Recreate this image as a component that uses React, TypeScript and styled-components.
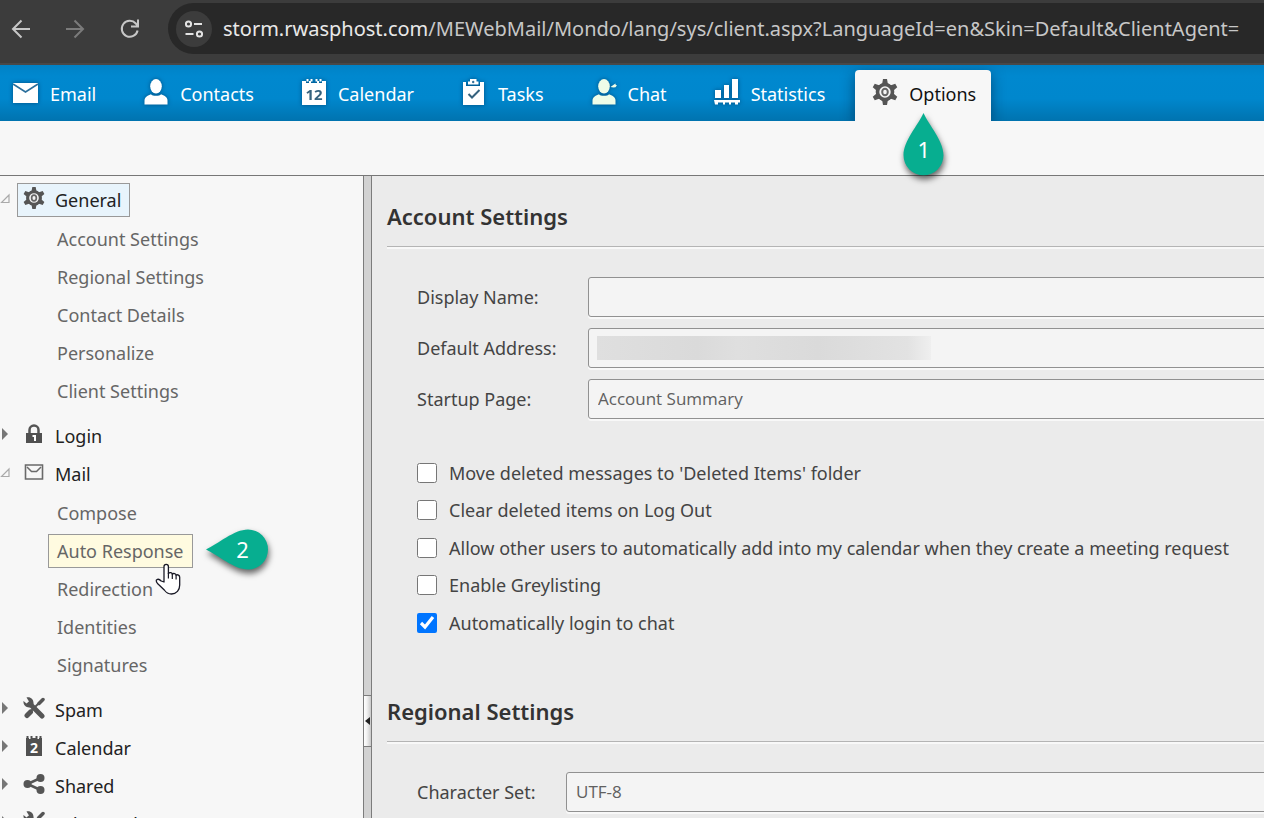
import React from "react";
import styled, { createGlobalStyle, css } from "styled-components";

const fontStack = `"Noto Sans", "Open Sans", sans-serif`;
const fieldFontStack = `"Open Sans", "Noto Sans", sans-serif`;

const GlobalStyle = createGlobalStyle`
  *, *::before, *::after { box-sizing: border-box; }
  body { margin: 0; background: #f7f7f7; color: #333; font: 18px/24px ${fontStack}; }
  button, input, select { font: inherit; color: inherit; }
  a { color: inherit; text-decoration: none; }
  svg { display: block; flex: none; }
`;

const Page = styled.div`
  display: flex;
  flex-direction: column;
  height: 100vh;
  overflow: hidden;
`;

/* Browser bar */

const BrowserBar = styled.header`
  display: flex;
  align-items: center;
  flex: none;
  height: 65px;
  padding-bottom: 6px;
  background: #3c3c3c;
  border-bottom: 2px solid #484848;
`;

const BrowserButton = styled.button<{ $dim?: boolean }>`
  display: flex;
  align-items: center;
  justify-content: center;
  width: 44px;
  height: 44px;
  padding: 0;
  border: 0;
  background: none;
  color: ${(p) => (p.$dim ? "#7b7b7b" : "#c7c7c7")};
  &:first-child { width: 42px; }
  &:nth-child(2) { width: 66px; }
`;

const AddressBar = styled.div`
  display: flex;
  align-items: center;
  flex: 1;
  height: 51px;
  min-width: 0;
  margin-left: 16px;
  padding-left: 8px;
  border-radius: 26px 0 0 26px;
  background: #282828;
  color: #c7c7c7;
  font-size: 20px;
  line-height: 32px;
  white-space: nowrap;
  overflow: hidden;
`;

const SiteInfo = styled.button`
  display: flex;
  align-items: center;
  justify-content: center;
  flex: none;
  width: 36px;
  height: 36px;
  margin-right: 11px;
  padding: 0;
  border: 0;
  border-radius: 50%;
  background: #3c3c3c;
  color: #e3e3e3;
`;

const Host = styled.span`
  color: #e8e8e8;
`;

/* Main navigation */

const Nav = styled.nav`
  display: flex;
  align-items: flex-end;
  gap: 15px;
  flex: none;
  height: 56px;
  margin-left: -4px;
  background: linear-gradient(#0082c6, #0088cf 20%, #0087cd 60%, #0073af);
`;

const NavLink = styled.a<{ $active?: boolean }>`
  position: relative;
  display: flex;
  align-items: center;
  gap: 11px;
  height: 51px;
  padding: 0 15px 4px 17px;
  color: #fff;
  white-space: nowrap;
  > svg { margin-bottom: 4px; }
  ${(p) =>
    p.$active
      ? css`
          z-index: 1;
          border-radius: 4px 4px 0 0;
          background: #f7f7f7;
          color: #111;
          &::before {
            content: "";
            position: absolute;
            inset: 0;
            z-index: -1;
            border-radius: inherit;
            box-shadow: 0 4px 14px rgba(0, 30, 60, 0.55);
            clip-path: inset(-5px -20px 0 -20px);
          }
        `
      : css`
          svg { filter: drop-shadow(0 0 2px rgba(0, 40, 80, 0.6)); }
        `}
`;

const Toolbar = styled.div`
  flex: none;
  height: 55px;
  border-bottom: 1px solid #777;
  background: #f7f7f7;
`;

const Body = styled.div`
  display: flex;
  flex: 1;
  min-height: 0;
`;

/* Options tree */

const Sidebar = styled.aside`
  flex: none;
  width: 363px;
  padding-top: 5px;
  overflow: hidden;
`;

const Tree = styled.ul`
  margin: 0;
  padding: 0;
  list-style: none;
`;

const Branch = styled(Tree)`
  margin: 1px 0 7px;
  padding-left: 48px;
`;

const Row = styled.div`
  display: flex;
  align-items: center;
  height: 38px;
`;

const Expander = styled.button`
  display: flex;
  align-items: center;
  width: 17px;
  height: 34px;
  padding: 0 0 4px;
  border: 0;
  background: none;
`;

const GroupLink = styled.a<{ $selected?: boolean }>`
  display: flex;
  align-items: center;
  gap: 10px;
  height: 34px;
  padding: 0 8px 0 5px;
  border: 1px solid ${(p) => (p.$selected ? "#999" : "transparent")};
  background: ${(p) => (p.$selected ? "#e8f4fc" : "transparent")};
  color: #222;
  svg { margin-bottom: 4px; }
`;

const ItemLink = styled.a<{ $hovered?: boolean }>`
  position: relative;
  display: flex;
  align-items: center;
  height: 34px;
  padding: 0 8px;
  border: 1px solid ${(p) => (p.$hovered ? "#999" : "transparent")};
  background: ${(p) => (p.$hovered ? "#fffbe0" : "transparent")};
  color: #666;
  white-space: nowrap;
`;

const Cursor = styled.span`
  position: absolute;
  left: 106px;
  top: 28px;
  z-index: 2;
`;

/* Callouts */

const Callout = styled.span<{ $side: "below" | "right" }>`
  position: absolute;
  z-index: 3;
  color: #fff;
  font-size: 22px;
  line-height: 40px;
  text-align: center;
  svg {
    position: absolute;
    inset: 0;
    overflow: visible;
    filter: drop-shadow(1px 4px 3px rgba(0, 0, 0, 0.6));
  }
  ${(p) =>
    p.$side === "below"
      ? css`
          left: calc(50% - 20px);
          top: 43px;
          width: 41px;
          padding-top: 16px;
        `
      : css`
          left: calc(100% + 14px);
          top: -6px;
          width: 62px;
          padding-left: 12px;
        `}
`;

const CalloutNumber = styled.span`
  position: relative;
`;

/* Splitter */

const Splitter = styled.div`
  display: flex;
  flex-direction: column;
  justify-content: flex-end;
  flex: none;
  width: 9px;
  padding-bottom: 71px;
  border: solid #7c7c7c;
  border-width: 0 1px;
  background: #d2d2d2;
`;

const SplitterHandle = styled.button`
  display: flex;
  align-items: center;
  justify-content: center;
  width: 7px;
  height: 52px;
  padding: 0;
  border: solid #7c7c7c;
  border-width: 1px 0;
  background: linear-gradient(90deg, #fff, #f2f2f2 40%, #c9c9c9);
`;

/* Settings form */

const Content = styled.main`
  flex: 1;
  min-width: 0;
  padding: 22px 0 0 15px;
  background: #ebebeb;
  overflow: hidden;
`;

const Section = styled.section`
  margin-bottom: 52px;
`;

const Heading = styled.h2`
  margin: 0 0 30px;
  padding-bottom: 12px;
  border-bottom: 1px solid #b4b4b4;
  box-shadow: 0 2px 0 #f8f8f8;
  color: #333;
  font-size: 22px;
  line-height: 36px;
  font-weight: 600;
`;

const Fields = styled.div`
  display: flex;
  flex-direction: column;
  gap: 11px;
  padding-left: 30px;
`;

const Field = styled.div<{ $labelWidth: number }>`
  display: grid;
  grid-template-columns: ${(p) => p.$labelWidth}px 1fr;
  align-items: center;
  margin-right: -20px;
  color: #444;
`;

const boxStyle = css`
  width: 100%;
  height: 40px;
  padding: 0 9px;
  border: 1px solid #919191;
  border-radius: 3px;
  background: #f4f4f4;
  box-shadow: 0 2px 0 #f8f8f8;
  color: #606060;
  font-family: ${fieldFontStack};
  font-size: 17px;
  outline: 0;
  appearance: none;
`;

const TextBox = styled.input`
  ${boxStyle}
`;

const SelectBox = styled.select<{ $masked?: boolean }>`
  ${boxStyle}
  ${(p) =>
    p.$masked &&
    css`
      background: linear-gradient(90deg, #dfdfdf, #dadada 30%, #dfdfdf 42%, #dadada 66%, #e2e2e2 93%, #efefef)
        8px 7px / 334px 24px no-repeat #f4f4f4;
    `}
`;

const Checks = styled.div`
  display: flex;
  flex-direction: column;
  margin-top: 35px;
  padding-left: 30px;
`;

const CheckLabel = styled.label`
  display: flex;
  align-items: center;
  gap: 12px;
  height: 38px;
  color: #444;
  white-space: nowrap;
  &:nth-child(odd) { height: 37px; }
`;

const Checkbox = styled.input`
  flex: none;
  width: 20px;
  height: 20px;
  margin: 0;
  accent-color: #0075ff;
`;

/* Icons */

const BackIcon = () => (
  <svg width="20" height="20" viewBox="0 0 20 20" fill="none" stroke="currentColor" strokeWidth="2">
    <path d="M19 10H2.5M10.5 1.5L2 10l8.500 8.500" />
  </svg>
);

const ForwardIcon = () => (
  <svg width="20" height="20" viewBox="0 0 20 20" fill="none" stroke="currentColor" strokeWidth="2">
    <path d="M1 10H17.500M9.500 1.500L18 10l-8.500 8.500" />
  </svg>
);

const ReloadIcon = () => (
  <svg width="20" height="20" viewBox="0 0 20 20" fill="none" stroke="currentColor" strokeWidth="2">
    <path d="M17.600 11.500A8 8 0 1 1 15.800 4.500L17.500 6.500M18 0.500V7.500H11" />
  </svg>
);

const TuneIcon = () => (
  <svg width="20" height="20" viewBox="0 0 20 20" fill="none" stroke="currentColor" strokeWidth="2">
    <circle cx="4.500" cy="5" r="2.600" />
    <path d="M10 5h8M1.500 15h8" />
    <circle cx="15.500" cy="15" r="2.600" />
  </svg>
);

const EmailIcon = () => (
  <svg width="26" height="28" viewBox="0 0 26 28">
    <path fill="#fff" d="M0 5h25v20H0z" />
    <path fill="none" stroke="#2b6f9c" strokeWidth="1.600" d="M0 6l12.500 8 12.500-8" />
  </svg>
);

const PersonShape = ({ fill }: { fill: string }) => (
  <g fill={fill}>
    <ellipse cx="13" cy="8.300" rx="5.800" ry="7.300" />
    <path d="M1.500 26.500v-4c0-3.500 3.500-5 6.500-6.200 1.200 2 8.800 2 10 0 3 1.200 6.500 2.700 6.500 6.200v4z" />
  </g>
);

const ContactsIcon = () => (
  <svg width="26" height="28" viewBox="0 0 26 28"><PersonShape fill="#fff" /></svg>
);

const ChatIcon = () => (
  <svg width="26" height="28" viewBox="0 0 26 28">
    <PersonShape fill="#eefde8" />
    <path fill="#eefde8" d="M19.500 9l3.500-2.500 1.500-1 .2 1.500 1.300.2-1.500 2-2 .3z" />
  </svg>
);

const CalendarNavIcon = () => (
  <svg width="26" height="28" viewBox="0 0 26 28">
    <path fill="#fff" d="M1 3h4v2h3V3h2v2h6V3h2v2h3V3h4v24H1z" />
    <path stroke="#fff" strokeWidth="2" d="M6.500 1v2.500M19.500 1v2.500M10.500 1v2.500M15.500 1v2.500" />
    <text x="13" y="22" textAnchor="middle" fontSize="15" fontWeight="700" fill="#35617d">12</text>
  </svg>
);

const TasksIcon = () => (
  <svg width="26" height="28" viewBox="0 0 26 28">
    <path fill="#fff" d="M2 4h3v4h14V4h4v23H2zM7 6.500V3.500h2V1h6.500v2.500h2v3z" />
    <circle cx="12.200" cy="4" r="1.200" fill="#35719a" />
    <path fill="none" stroke="#35617d" strokeWidth="2" d="M7.500 16l3.500 3.500 7.500-7.500" />
  </svg>
);

const StatisticsIcon = () => (
  <svg width="26" height="28" viewBox="0 0 26 28">
    <path fill="#fff" d="M1 12h6v8H1zM10 7h5v13h-5zM18 1h6v19h-6zM0 22h26v2.500h-2v2h-3v-2h-4v2h-2v-2h-4v2H9v-2H4v2H1z" />
  </svg>
);

const GearIcon = ({ size }: { size: number }) => (
  <svg width={size} height={size} viewBox="0 0 26 26">
    {[0, 60, 120, 180, 240, 300].map((angle) => (
      <path key={angle} fill="#555" transform={`rotate(${angle} 13 13)`} d="M11 0h4l.8 4.500 2.200 1.500H8l2.200-1.500z" />
    ))}
    <circle cx="13" cy="13" r="7.500" fill="#f4f4f4" stroke="#555" strokeWidth="3.600" />
    <ellipse cx="13" cy="13" rx="2.800" ry="3.300" fill="none" stroke="#666" strokeWidth="2" />
  </svg>
);

const LockIcon = () => (
  <svg width="22" height="22" viewBox="0 0 22 22">
    <path fill="none" stroke="#555" strokeWidth="2.500" d="M6.500 10V7a4.500 4.500 0 0 1 9 0V10" />
    <path fill="#505050" d="M3 10h16v10H3z" />
    <path fill="none" stroke="#fff" strokeWidth="2" d="M9.500 13H12V18" />
  </svg>
);

const MailIcon = () => (
  <svg width="22" height="22" viewBox="0 0 22 22" fill="none" stroke="#6a6a6a">
    <path strokeWidth="1.600" d="M2.500 4h17v14h-17z" />
    <path strokeWidth="1.500" d="M4 6l4.500 4.500h5L18 6" />
  </svg>
);

const ToolsIcon = () => (
  <svg width="22" height="22" viewBox="0 0 22 22">
    <g fill="none" stroke="#555" strokeLinecap="round">
      <path strokeWidth="5" d="M4 18.500l3.500-3.500" />
      <path strokeWidth="2" d="M8 14l7-7" />
      <path strokeWidth="3.500" d="M16 6.500l4-4" />
      <path strokeWidth="5" d="M7 7l12 12" />
    </g>
    <path fill="#555" d="M3.500 .5C8-.5 11 3 10.500 7L7 10.500C3 11 0 8 .5 4L3.500 6.500 6 4.500z" />
  </svg>
);

const CalendarIcon = () => (
  <svg width="22" height="22" viewBox="0 0 22 22">
    <path fill="#505050" d="M3 3h3v1h3V3h4v1h3V3h3v18H3z" />
    <path stroke="#505050" strokeWidth="2" d="M4.500 1v3M8.500 1v3M13.500 1v3M17.500 1v3" />
    <text x="11" y="18" textAnchor="middle" fontSize="14" fontWeight="700" fill="#fff">2</text>
  </svg>
);

const ShareIcon = () => (
  <svg width="22" height="22" viewBox="0 0 22 22" fill="#555">
    <path fill="none" stroke="#555" strokeWidth="2.500" d="M17.500 5L4.500 11l13 6" />
    <circle cx="4.500" cy="11" r="4" />
    <circle cx="17.500" cy="5" r="4" />
    <circle cx="17.500" cy="17" r="4" />
  </svg>
);

const OpenArrow = () => (
  <svg width="10" height="10" viewBox="0 0 10 10">
    <path fill="none" stroke="#aaa" strokeWidth="1.200" d="M1.500 9.500H9V2z" />
  </svg>
);

const ClosedArrow = () => (
  <svg width="10" height="12" viewBox="0 0 10 12"><path fill="#777" d="M2 0l6 6-6 6z" /></svg>
);

const HandIcon = () => (
  <svg width="30" height="34" viewBox="0 0 30 34">
    <path
      fill="#fff"
      stroke="#181825"
      strokeWidth="1.300"
      strokeLinejoin="round"
      d="M9 19V3.500a2.200 2.200 0 0 1 4.400 0V10.500c1.200-1.400 3.500-1 3.900.6 1.300-1.100 3.400-.6 3.800 1 1.500-.8 3.600 0 3.600 2.200V22c0 5-3.200 9-8.200 9-3.500 0-5.500-1.500-7.200-4L2.500 20.500c-1-1.500-1.800-3-.8-3.700 1.300-1 3.200-.2 4.500 1.200z"
    />
    <path fill="none" stroke="#181825" strokeWidth="1.200" d="M13.400 10v5.500M17.300 11v5M21.100 12v4.500" />
  </svg>
);

const BelowPin = () => (
  <svg width="41" height="63" viewBox="0 0 41 63">
    <path fill="#07ae90" d="M20.500 0C26 12 40.500 28 40.500 42.300A20 20 0 0 1 .5 42.300C.5 28 15 12 20.500 0z" />
  </svg>
);

const RightPin = () => (
  <svg width="62" height="41" viewBox="0 0 62 41">
    <path fill="#07ae90" d="M0 20.500C12 15 28 .5 42 .5A20 20 0 0 1 42 40.500C28 40.500 12 26 0 20.500z" />
  </svg>
);

/* Data */

const navItems = [
  { label: "Email", icon: <EmailIcon /> },
  { label: "Contacts", icon: <ContactsIcon /> },
  { label: "Calendar", icon: <CalendarNavIcon /> },
  { label: "Tasks", icon: <TasksIcon /> },
  { label: "Chat", icon: <ChatIcon /> },
  { label: "Statistics", icon: <StatisticsIcon /> },
];

const groups: { label: string; icon: React.ReactNode; items?: string[] }[] = [
  {
    label: "General",
    icon: <GearIcon size={22} />,
    items: ["Account Settings", "Regional Settings", "Contact Details", "Personalize", "Client Settings"],
  },
  { label: "Login", icon: <LockIcon /> },
  {
    label: "Mail",
    icon: <MailIcon />,
    items: ["Compose", "Auto Response", "Redirection", "Identities", "Signatures"],
  },
  { label: "Spam", icon: <ToolsIcon /> },
  { label: "Calendar", icon: <CalendarIcon /> },
  { label: "Shared", icon: <ShareIcon /> },
  { label: "Advanced", icon: <ToolsIcon /> },
];

const checks = [
  { label: "Move deleted messages to 'Deleted Items' folder" },
  { label: "Clear deleted items on Log Out" },
  { label: "Allow other users to automatically add into my calendar when they create a meeting request" },
  { label: "Enable Greylisting" },
  { label: "Automatically login to chat", checked: true },
];

const TreeItem = ({ label }: { label: string }) => {
  const hovered = label === "Auto Response";
  return (
    <Row as="li">
      <ItemLink href="#" $hovered={hovered}>
        {label}
        {hovered && (
          <>
            <Callout $side="right">
              <RightPin />
              <CalloutNumber>2</CalloutNumber>
            </Callout>
            <Cursor><HandIcon /></Cursor>
          </>
        )}
      </ItemLink>
    </Row>
  );
};

export default function App() {
  return (
    <Page>
      <GlobalStyle />
      <BrowserBar>
        <BrowserButton aria-label="Back"><BackIcon /></BrowserButton>
        <BrowserButton aria-label="Forward" $dim><ForwardIcon /></BrowserButton>
        <BrowserButton aria-label="Reload"><ReloadIcon /></BrowserButton>
        <AddressBar>
          <SiteInfo aria-label="View site information"><TuneIcon /></SiteInfo>
          <Host>storm.rwasphost.com</Host>
          <span>/MEWebMail/Mondo/lang/sys/client.aspx?LanguageId=en&amp;Skin=Default&amp;ClientAgent=</span>
        </AddressBar>
      </BrowserBar>

      <Nav>
        {navItems.map((item) => (
          <NavLink key={item.label} href="#">
            {item.icon}
            {item.label}
          </NavLink>
        ))}
        <NavLink href="#" $active>
          <GearIcon size={26} />
          Options
          <Callout $side="below">
            <BelowPin />
            <CalloutNumber>1</CalloutNumber>
          </Callout>
        </NavLink>
      </Nav>
      <Toolbar />

      <Body>
        <Sidebar>
          <Tree>
            {groups.map((group) => (
              <li key={group.label}>
                <Row>
                  <Expander aria-label={`Toggle ${group.label}`}>
                    {group.items ? <OpenArrow /> : <ClosedArrow />}
                  </Expander>
                  <GroupLink href="#" $selected={group.label === "General"}>
                    {group.icon}
                    {group.label}
                  </GroupLink>
                </Row>
                {group.items && (
                  <Branch>
                    {group.items.map((item) => <TreeItem key={item} label={item} />)}
                  </Branch>
                )}
              </li>
            ))}
          </Tree>
        </Sidebar>

        <Splitter>
          <SplitterHandle aria-label="Collapse sidebar">
            <svg width="5" height="8" viewBox="0 0 5 8"><path fill="#222" d="M5 0v8L0 4z" /></svg>
          </SplitterHandle>
        </Splitter>

        <Content>
          <Section>
            <Heading>Account Settings</Heading>
            <Fields>
              <Field $labelWidth={171}>
                <label htmlFor="display-name">Display Name:</label>
                <TextBox id="display-name" type="text" />
              </Field>
              <Field $labelWidth={171}>
                <label htmlFor="default-address">Default Address:</label>
                <SelectBox id="default-address" $masked />
              </Field>
              <Field $labelWidth={171}>
                <label htmlFor="startup-page">Startup Page:</label>
                <SelectBox id="startup-page"><option>Account Summary</option></SelectBox>
              </Field>
            </Fields>
            <Checks>
              {checks.map((check) => (
                <CheckLabel key={check.label}>
                  <Checkbox type="checkbox" defaultChecked={check.checked} />
                  {check.label}
                </CheckLabel>
              ))}
            </Checks>
          </Section>
          <Section>
            <Heading>Regional Settings</Heading>
            <Fields>
              <Field $labelWidth={149}>
                <label htmlFor="character-set">Character Set:</label>
                <SelectBox id="character-set"><option>UTF-8</option></SelectBox>
              </Field>
            </Fields>
          </Section>
        </Content>
      </Body>
    </Page>
  );
}
